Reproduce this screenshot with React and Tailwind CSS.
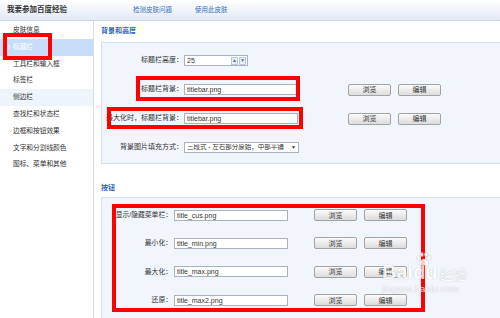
const sideItems = [
  "皮肤信息",
  "标题栏",
  "工具栏和输入框",
  "标签栏",
  "侧边栏",
  "查找栏和状态栏",
  "边框和按钮效果",
  "文字和分割线颜色",
  "图标、菜单和其他",
];

const buttonRows = [
  { label: "显示/隐藏菜单栏：", file: "title_cus.png" },
  { label: "最小化：", file: "title_min.png" },
  { label: "最大化：", file: "title_max.png" },
  { label: "还原：", file: "title_max2.png" },
];

function Btn({ children }) {
  return (
    <div className="w-[43px] h-[12px] flex items-center justify-center rounded-[2px] border border-[#a3a3a3] bg-linear-to-b from-[#fbfbfb] to-[#dcdcdc] text-[7px] leading-none text-[#333]">
      {children}
    </div>
  );
}

function Field({ w, children }) {
  return (
    <div
      className={`${w} h-[11px] flex items-center border border-[#a9b3bf] bg-white pl-[2px] text-[7px] leading-none text-[#333]`}
    >
      {children}
    </div>
  );
}

function RedBox({ className }) {
  return <div className={`absolute border-[4px] border-[#ff0000] pointer-events-none ${className}`} />;
}

export default function App() {
  return (
    <div className="relative w-[500px] h-[318px] overflow-hidden bg-white font-['Liberation_Sans','Noto_Sans_CJK_SC',sans-serif]">
      {/* header */}
      <div className="h-[21px] flex items-center border-b border-[#cbd7e6] bg-linear-to-b from-white to-[#e2eaf6]">
        <div className="w-[133px] pl-[7px] text-[7.5px] font-bold text-[#333]">我要参加百度经验</div>
        <div className="w-[62px] text-[6.5px] text-[#3b6fbd]">检测皮肤问题</div>
        <div className="text-[6.5px] text-[#3b6fbd]">使用此皮肤</div>
      </div>

      <div className="flex h-[297px]">
        {/* sidebar */}
        <div className="w-[94px] shrink-0 border-r border-[#d3deec] bg-white pt-[1px]">
          {sideItems.map((item, i) => (
            <div
              key={item}
              className={`h-[16.8px] flex items-center pl-[13px] text-[6.7px] leading-none ${
                i === 1
                  ? "bg-[#c7ddf8] text-white relative"
                  : i === 4
                  ? "bg-[#eef4fc] text-[#333]"
                  : "text-[#333]"
              }`}
            >
              {i === 1 && (
                <svg className="absolute left-[4px] w-[6px] h-[6px]" viewBox="0 0 10 10">
                  <circle cx="5" cy="5" r="4" fill="none" stroke="#fff" strokeWidth="1.2" />
                  <path d="M4 3l2 2-2 2" fill="none" stroke="#fff" strokeWidth="1.2" />
                </svg>
              )}
              {item}
            </div>
          ))}
        </div>

        {/* content */}
        <div className="flex-1 pl-[7px] flex flex-col">
          <div className="h-[21px] flex items-center text-[7px] font-bold text-[#2b66b5]">背景和高度</div>
          <div className="h-[122px] border-t border-l border-b border-[#d6e1ee] bg-[#f1f5fc] pt-[3px]">
            <div className="h-[29px] flex items-center">
              <div className="w-[81px] text-right text-[7px] text-[#333]">标题栏高度：</div>
              <div className="ml-[1px] w-[64px] h-[11px] flex items-center border border-[#a9b3bf] bg-white pl-[2px] text-[7px] leading-none text-[#333]">
                <span className="flex-1">25</span>
                <div className="flex gap-[1px] pr-[1px]">
                  <div className="w-[7px] h-[8px] flex items-center justify-center border border-[#b9c8dc] bg-[#eaf1fb] text-[5px] text-[#4a6ea8]">▲</div>
                  <div className="w-[7px] h-[8px] flex items-center justify-center border border-[#b9c8dc] bg-[#eaf1fb] text-[5px] text-[#4a6ea8]">▼</div>
                </div>
              </div>
            </div>
            <div className="h-[29px] flex items-center">
              <div className="w-[81px] text-right text-[7px] text-[#333]">标题栏背景：</div>
              <div className="ml-[1px]"><Field w="w-[114px]">titlebar.png</Field></div>
              <div className="ml-[50px] flex gap-[7px]">
                <Btn>浏览</Btn>
                <Btn>编辑</Btn>
              </div>
            </div>
            <div className="h-[29px] flex items-center">
              <div className="w-[81px] text-right text-[7px] text-[#333] whitespace-nowrap">最大化时，标题栏背景：</div>
              <div className="ml-[1px]"><Field w="w-[114px]">titlebar.png</Field></div>
              <div className="ml-[50px] flex gap-[7px]">
                <Btn>浏览</Btn>
                <Btn>编辑</Btn>
              </div>
            </div>
            <div className="h-[29px] flex items-center">
              <div className="w-[81px] text-right text-[7px] text-[#333]">背景图片填充方式：</div>
              <div className="ml-[1px] w-[115px] h-[11px] flex items-center border border-[#a9b3bf] bg-white pl-[2px] text-[6.5px] leading-none text-[#333] whitespace-nowrap">
                <span className="flex-1 overflow-hidden">三段式 - 左右部分原始，中部平铺</span>
                <span className="px-[2px] text-[5px]">▼</span>
              </div>
            </div>
          </div>

          <div className="h-[33px] flex items-end pb-[4px] text-[7px] font-bold text-[#2b66b5]">按钮</div>
          <div className="flex-1 border-t border-l border-[#d6e1ee] bg-[#f1f5fc] pt-[3px]">
            {buttonRows.map((row) => (
              <div key={row.file} className="h-[28.3px] flex items-center">
                <div className="w-[70px] text-right text-[6.8px] text-[#333] whitespace-nowrap">{row.label}</div>
                <div className="ml-[2px]"><Field w="w-[114px]">{row.file}</Field></div>
                <div className="ml-[26px] flex gap-[7px]">
                  <Btn>浏览</Btn>
                  <Btn>编辑</Btn>
                </div>
              </div>
            ))}
          </div>
        </div>
      </div>

      {/* annotation boxes */}
      <RedBox className="left-[3px] top-[33px] w-[49px] h-[27px]" />
      <RedBox className="left-[136px] top-[76px] w-[164px] h-[25px]" />
      <RedBox className="left-[107px] top-[107px] w-[196px] h-[22px]" />
      <RedBox className="left-[112px] top-[204px] w-[313px] h-[108px]" />

      {/* watermark */}
      <div className="absolute left-[382px] top-[262px] flex flex-col text-white opacity-80 [text-shadow:0_0_1px_rgba(0,0,0,0.35)] pointer-events-none">
        <div className="flex items-end leading-none">
          <span className="text-[20px] font-bold font-['Liberation_Sans',sans-serif]">Bai</span>
          <span className="relative text-[20px] font-bold font-['Liberation_Sans',sans-serif]">
            <svg className="absolute left-[2px] -top-[10px] w-[17px] h-[15px]" viewBox="0 0 20 18">
              <g fill="#fff" stroke="rgba(0,0,0,0.25)" strokeWidth="0.6">
                <ellipse cx="4" cy="7" rx="2.2" ry="2.8" />
                <ellipse cx="8" cy="3" rx="2.2" ry="2.8" />
                <ellipse cx="13" cy="3" rx="2.2" ry="2.8" />
                <ellipse cx="17" cy="7" rx="2.2" ry="2.8" />
                <path d="M10.5 8c3 0 6 4 6 6.5S13 17 10.5 16 4.5 17 4.5 14.5 7.5 8 10.5 8z" />
              </g>
            </svg>
            du
          </span>
          <span className="ml-[2px] mb-[1px] text-[14px] font-['Noto_Sans_CJK_SC',sans-serif]">经验</span>
        </div>
        <div className="mt-[2px] text-[9.5px] leading-none font-['Liberation_Sans',sans-serif]">jingyan.baidu.com</div>
      </div>
    </div>
  );
}
